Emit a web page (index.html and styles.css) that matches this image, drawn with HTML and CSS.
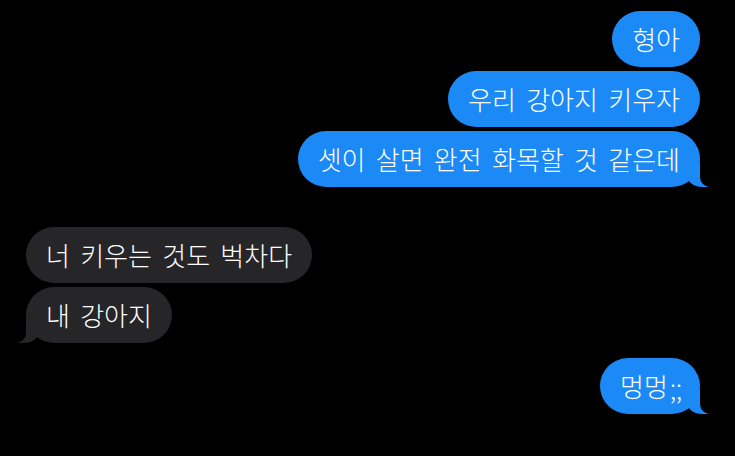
FILE: index.html
```html
<!DOCTYPE html>
<html lang="ko">

<head>
    <meta charset="UTF-8">
    <meta name="viewport" content="width=device-width, initial-scale=1.0">
    <title>messages</title>
    <link rel="stylesheet" href="styles.css">
</head>

<body>
    <div class="chat">
        <div class="group sent">
            <div class="bubble">형아</div>
            <div class="bubble">우리 강아지 키우자</div>
            <div class="bubble tail">셋이 살면 완전 화목할 것 같은데</div>
        </div>
        <div class="group received">
            <div class="bubble">너 키우는 것도 벅차다</div>
            <div class="bubble tail">내 강아지</div>
        </div>
        <div class="group sent last">
            <div class="bubble tail">멍멍<span class="semi">;;</span></div>
        </div>
    </div>
</body>

</html>
```

FILE: styles.css
```css
html, body {
    margin: 0;
    background: #000;
}
body {
    width: 735px;
    height: 456px;
    overflow: hidden;
    font-family: "Noto Sans CJK KR", "Noto Sans", sans-serif;
    color: #fff;
}
.chat {
    display: flex;
    flex-direction: column;
    padding: 11px 35px 0 26px;
}
.group {
    display: flex;
    flex-direction: column;
    gap: 4px;
}
.sent {
    align-items: flex-end;
}
.received {
    align-items: flex-start;
    margin-top: 40px;
}
.last {
    margin-top: 15px;
}
.bubble {
    position: relative;
    height: 56px;
    box-sizing: border-box;
    padding: 0 20px;
    display: flex;
    align-items: center;
    font-size: 26px;
    font-weight: 300;
    line-height: 1;
    word-spacing: 3px;
    border-radius: 28px;
    white-space: nowrap;
}
.sent .bubble {
    background: #1b8af6;
}
.received .bubble {
    background: #262628;
}
.semi {
    position: relative;
    top: 6px;
    left: 2px;
    font-size: 24px;
}

/* tails */
.tail::before,
.tail::after {
    content: "";
    position: absolute;
    bottom: 0;
    height: 25px;
}
.sent .tail::before {
    right: -8px;
    width: 22px;
    background: #1b8af6;
    border-bottom-left-radius: 16px 14px;
}
.sent .tail::after {
    right: -26px;
    width: 26px;
    background: #000;
    border-bottom-left-radius: 10px;
}
.received .tail::before {
    left: -8px;
    width: 22px;
    background: #262628;
    border-bottom-right-radius: 16px 14px;
}
.received .tail::after {
    left: -26px;
    width: 26px;
    background: #000;
    border-bottom-right-radius: 10px;
}
```
